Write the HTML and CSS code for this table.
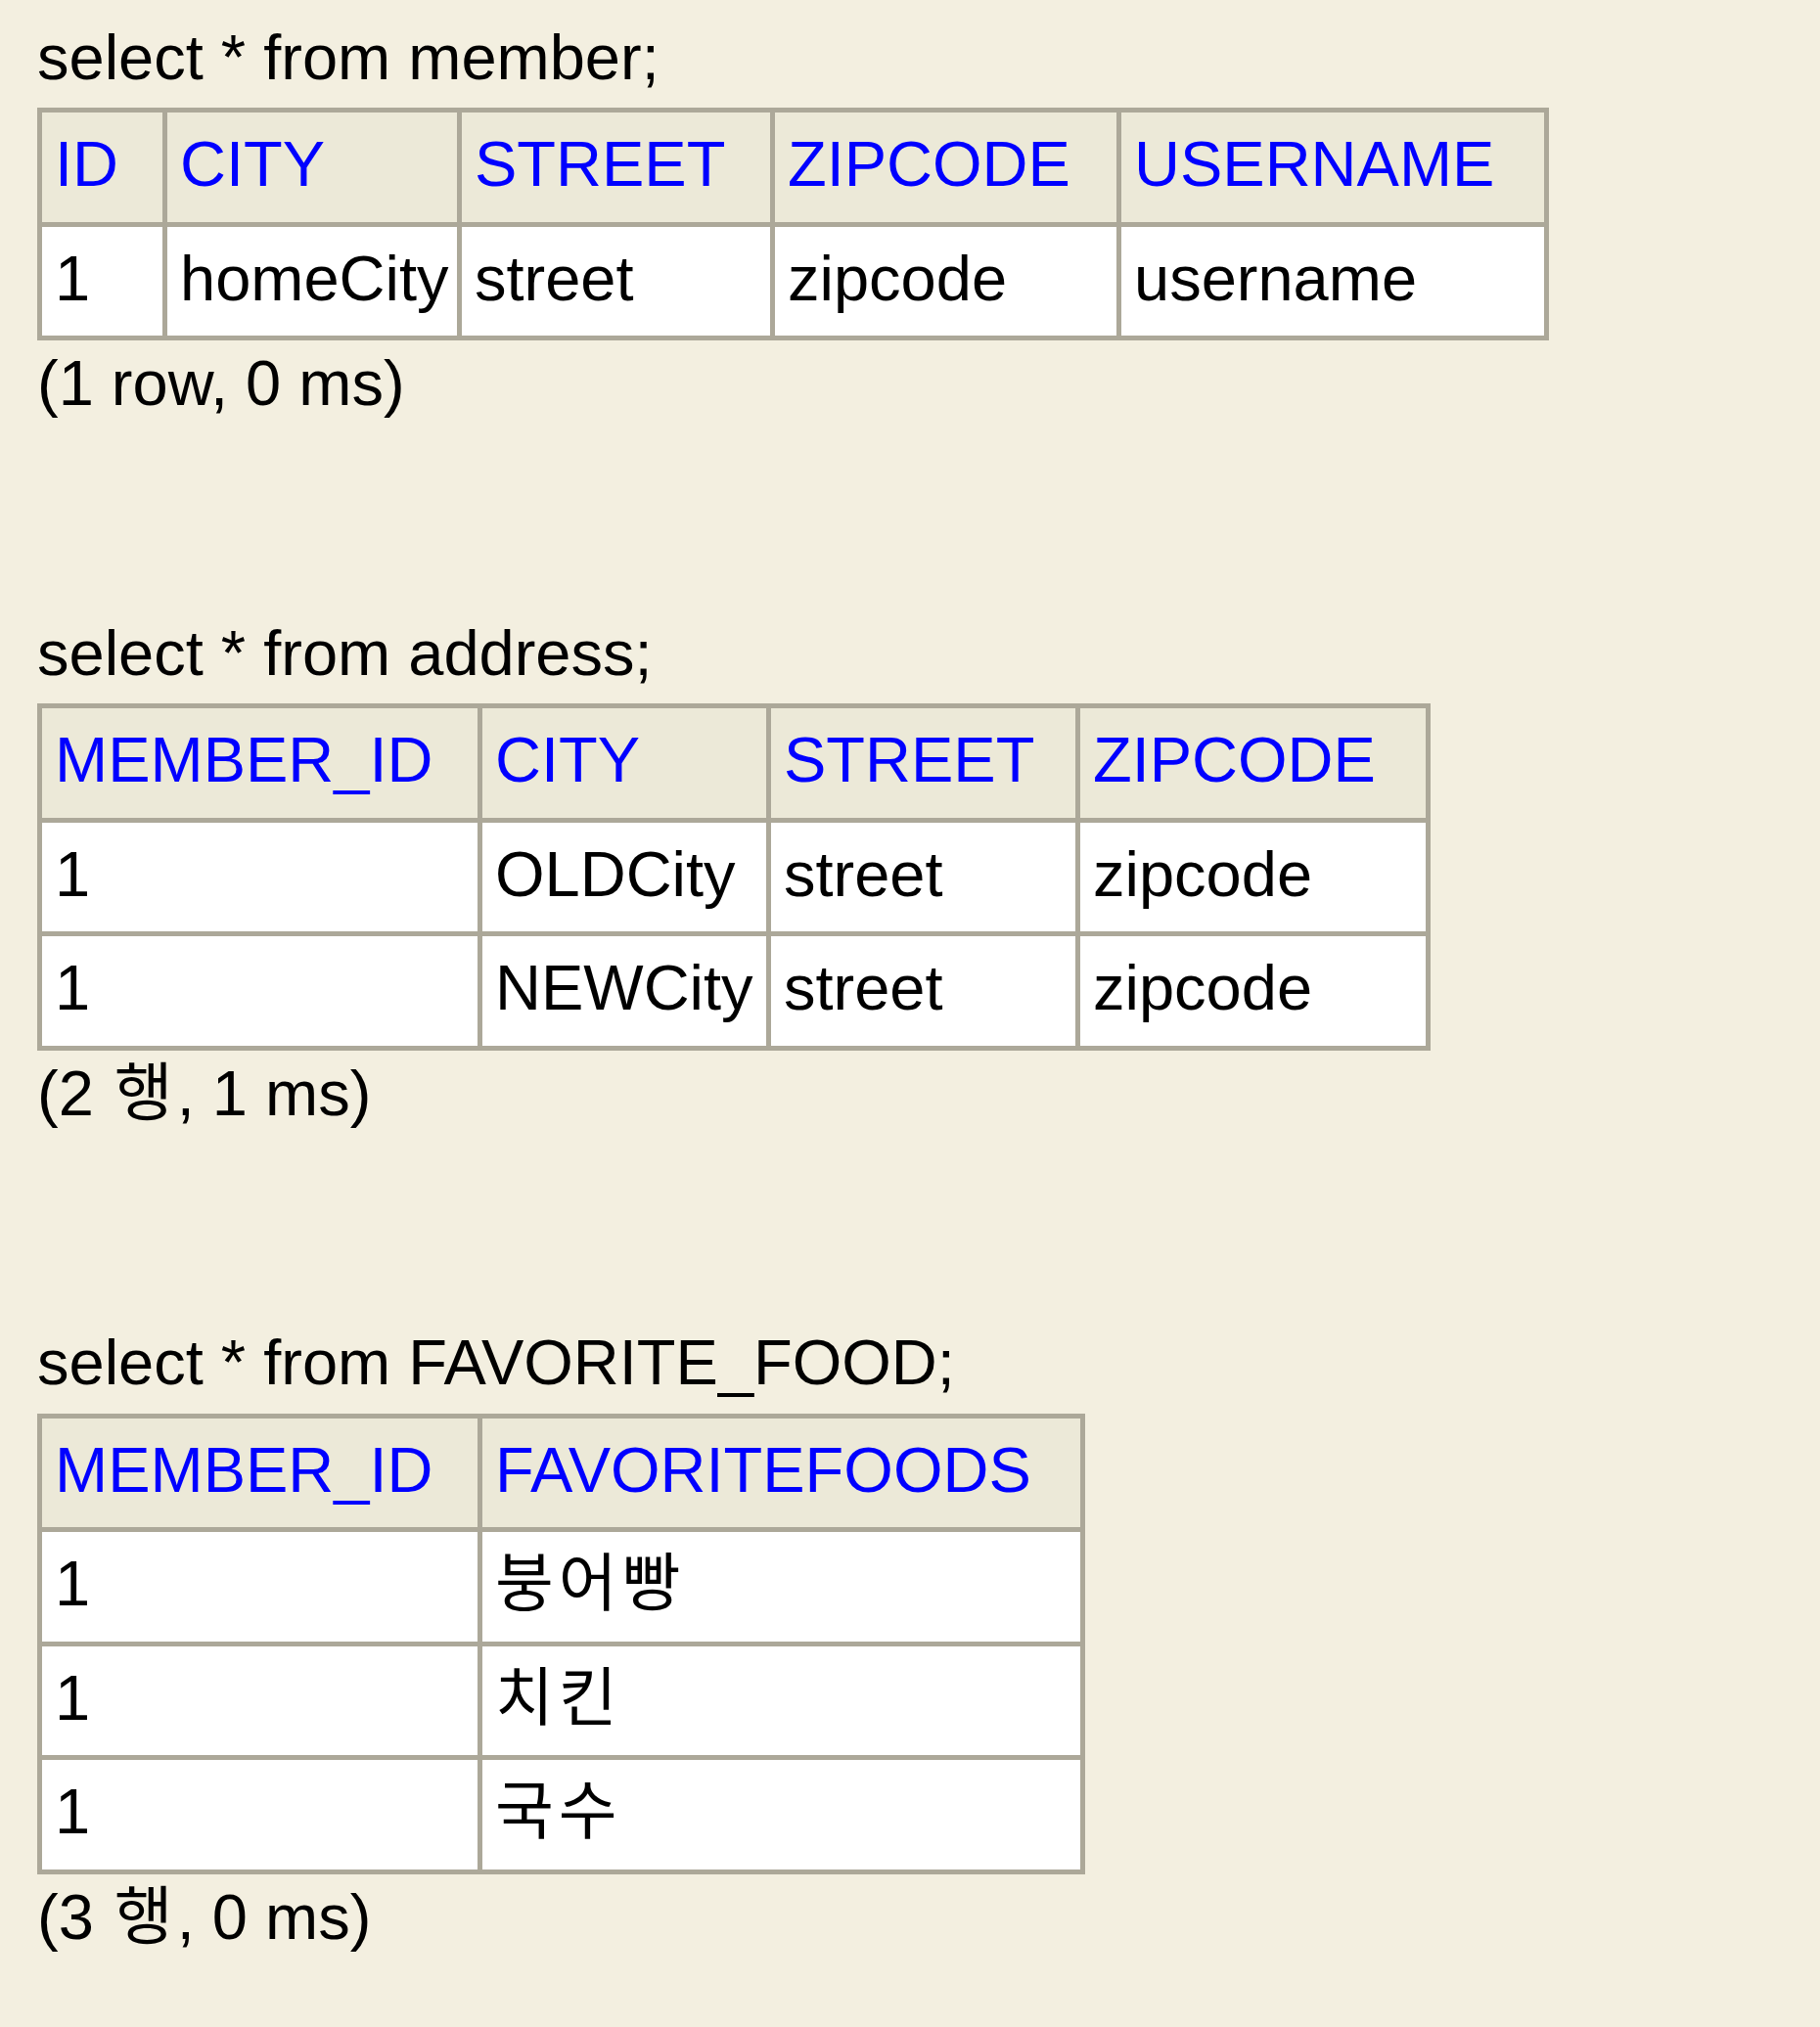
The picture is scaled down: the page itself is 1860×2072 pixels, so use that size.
FILE: index.html
```html
<!DOCTYPE html>
<html lang="ko">
<head>
<meta charset="utf-8">
<title>H2 Console Result</title>
<link rel="stylesheet" href="styles.css">
</head>
<body>
<main class="page">
  <section class="query">
    <div class="sql">select * from member;</div>
    <table class="result">
      <tr>
        <th class="c-id">ID</th>
        <th class="c-city1">CITY</th>
        <th class="c-street1">STREET</th>
        <th class="c-zip1">ZIPCODE</th>
        <th class="c-user">USERNAME</th>
      </tr>
      <tr>
        <td>1</td>
        <td>homeCity</td>
        <td>street</td>
        <td>zipcode</td>
        <td>username</td>
      </tr>
    </table>
    <div class="status">(1 row, 0 ms)</div>
  </section>

  <section class="query">
    <div class="sql">select * from address;</div>
    <table class="result">
      <tr>
        <th class="c-mid">MEMBER_ID</th>
        <th class="c-city2">CITY</th>
        <th class="c-street2">STREET</th>
        <th class="c-zip2">ZIPCODE</th>
      </tr>
      <tr>
        <td>1</td>
        <td>OLDCity</td>
        <td>street</td>
        <td>zipcode</td>
      </tr>
      <tr>
        <td>1</td>
        <td>NEWCity</td>
        <td>street</td>
        <td>zipcode</td>
      </tr>
    </table>
    <div class="status">(2 <span class="ko ko-status">행</span>, 1 ms)</div>
  </section>

  <section class="query">
    <div class="sql">select * from FAVORITE_FOOD;</div>
    <table class="result">
      <tr>
        <th class="c-mid">MEMBER_ID</th>
        <th class="c-foods">FAVORITEFOODS</th>
      </tr>
      <tr>
        <td>1</td>
        <td><span class="ko">붕어빵</span></td>
      </tr>
      <tr>
        <td>1</td>
        <td><span class="ko">치킨</span></td>
      </tr>
      <tr>
        <td>1</td>
        <td><span class="ko">국수</span></td>
      </tr>
    </table>
    <div class="status">(3 <span class="ko ko-status">행</span>, 0 ms)</div>
  </section>
</main>
</body>
</html>
```

FILE: styles.css
```css
html {
  background: #f3efe0;
}

body {
  margin: 0;
  background: #f3efe0;
  color: #000;
  font-family: "Liberation Sans", Arial, "Noto Sans CJK KR", sans-serif;
  font-size: 65px;
  line-height: 74px;
}

.page {
  padding: 21.5px 0 0 38px;
}

.query + .query {
  margin-top: 201.5px;
}

.sql {
  white-space: nowrap;
}

.result {
  margin-top: 14.5px;
  border-collapse: separate;
  border-spacing: 0;
  border-top: 5px solid #aca899;
  border-left: 5px solid #aca899;
}

.result th,
.result td {
  padding: 16px 7px 21.5px 13px;
  border-right: 5px solid #aca899;
  border-bottom: 5px solid #aca899;
  text-align: left;
  vertical-align: top;
  white-space: nowrap;
  font-weight: normal;
  line-height: 74px;
}

.result th {
  background: #ece9d8;
  color: #0000ff;
}

.result td {
  background: #ffffff;
  color: #000;
}

.status {
  margin-top: 7px;
  white-space: nowrap;
}

.ko {
  letter-spacing: 5px;
}

.ko-status {
  letter-spacing: 0;
  margin: 0 4px 0 3px;
}

/* column widths */
.c-id { width: 103px; }
.c-city1 { width: 276px; }
.c-street1 { width: 295px; }
.c-zip1 { width: 329px; }
.c-user { width: 412px; }

.c-mid { width: 425px; }
.c-city2 { width: 270px; }
.c-street2 { width: 291px; }
.c-zip2 { width: 333px; }

.c-foods { width: 591px; }
```
